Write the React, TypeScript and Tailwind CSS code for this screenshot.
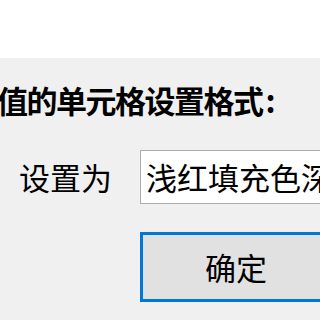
export default function App() {
  const font = { fontFamily: '"Noto Sans CJK SC", "Noto Sans", sans-serif' };
  return (
    <div className="w-[320px] h-[320px] overflow-hidden bg-[#f0f0f0] text-black" style={font}>
      {/* white strip above the dialog body */}
      <div className="h-[58px] bg-white" />

      <div className="flex flex-col">
        <div className="mt-[26px] ml-[-3px] whitespace-nowrap text-[31px] leading-[32px] tracking-[-1.5px] font-bold">
          值的单元格设置格式<span className="ml-[3px]">:</span>
        </div>

        <div className="mt-[34px] flex items-center">
          <span className="w-[140px] shrink-0 pl-[19px] text-[31px] leading-[32px] whitespace-nowrap">设置为</span>
          <div className="h-[54px] w-[200px] shrink-0 border border-[#acacac] bg-white flex items-center pl-[5px] text-[31px] leading-[32px] whitespace-nowrap overflow-hidden">
            浅红填充色深红色文本
          </div>
        </div>

        <div className="mt-[28px] pl-[140px]">
          <button className="h-[70px] w-[192px] shrink-0 border-[3px] border-[#0078d7] bg-[#e1e1e1] text-[31px] leading-[32px] flex items-center justify-center">
            确定
          </button>
        </div>
      </div>
    </div>
  );
}
